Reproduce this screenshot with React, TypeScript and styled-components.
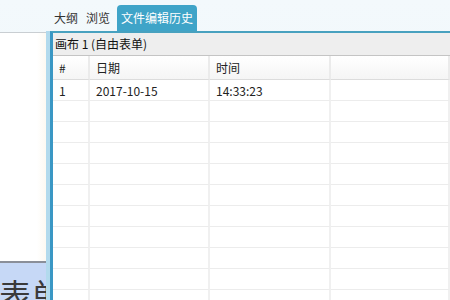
import styled, { createGlobalStyle } from "styled-components";

const GlobalStyle = createGlobalStyle`
  *, *::before, *::after {
    box-sizing: border-box;
  }

  html, body {
    margin: 0;
    padding: 0;
    width: 450px;
    height: 300px;
    overflow: hidden;
    background: #eef6fa;
    font-family: "Noto Sans CJK SC", "Noto Sans", sans-serif;
    font-size: 12px;
    color: #222;
  }
`;

const tabs = ["大纲", "浏览", "文件编辑历史"];
const activeTab = 2;

const rows = [{ id: "1", date: "2017-10-15", time: "14:33:23" }];
const emptyRows = 10;

const App = () => {
  return (
    <Page>
      <GlobalStyle />
      <TabBar>
        {tabs.map((t, i) => (
          <Tab key={t} active={i === activeTab}>
            {t}
          </Tab>
        ))}
      </TabBar>

      <Body>
        <LeftPane>
          <LeftBlank />
          <FormTitle>
            <BigText>表单</BigText>
          </FormTitle>
        </LeftPane>

        <Splitter />

        <Panel>
          <PanelTitle>画布 1 (自由表单)</PanelTitle>
          <Grid>
            <HeadCell>#</HeadCell>
            <HeadCell>日期</HeadCell>
            <HeadCell>时间</HeadCell>
            <HeadCell />
            {rows.map((r) => (
              <Row key={r.id}>
                <Cell>{r.id}</Cell>
                <Cell>{r.date}</Cell>
                <Cell>{r.time}</Cell>
                <Cell />
              </Row>
            ))}
            {Array.from({ length: emptyRows }).map((_, i) => (
              <Row key={"e" + i}>
                <Cell />
                <Cell />
                <Cell />
                <Cell />
              </Row>
            ))}
          </Grid>
        </Panel>
      </Body>
    </Page>
  );
};

const Page = styled.div`
  width: 450px;
  height: 300px;
  display: flex;
  flex-direction: column;
  background: linear-gradient(#f3f9fc, #edf5f9);
`;

const TabBar = styled.div`
  height: 31px;
  display: flex;
  align-items: flex-end;
  padding-left: 51px;
  gap: 2px;
`;

type TTab = {
  active?: boolean;
};

const Tab = styled.div<TTab>`
  height: 26px;
  line-height: 26px;
  padding: 0 ${({ active }) => (active ? "4px" : "3px")};
  border-radius: 4px 4px 0 0;
  background: ${({ active }) => (active ? "#3fa4c8" : "transparent")};
  color: ${({ active }) => (active ? "#fff" : "#333")};
  font-size: 12px;
  margin-left: ${({ active }) => (active ? "2px" : "0")};
`;

const Body = styled.div`
  flex: 1;
  display: flex;
  min-height: 0;
`;

const LeftPane = styled.div`
  width: 46px;
  display: flex;
  flex-direction: column;
  margin-top: 1px;
  border-top: 1px solid #c9ced2;
  background: #fff;
  overflow: hidden;
`;

const LeftBlank = styled.div`
  flex: 1;
  background: linear-gradient(90deg, #fff 80%, #fcf9f2);
`;

const FormTitle = styled.div`
  height: 39px;
  border-top: 2px solid #8a8f99;
  background: #c6d8f6;
  overflow: hidden;
  white-space: nowrap;
`;

const BigText = styled.div`
  font-family: "Noto Sans CJK SC", serif;
  font-size: 32px;
  line-height: 32px;
  color: #3a3a3a;
  padding-top: 14px;
  margin-left: -1px;
`;

const Splitter = styled.div`
  width: 4px;
  background: #b2daed;
`;

const Panel = styled.div`
  flex: 1;
  display: flex;
  flex-direction: column;
  border-left: 3px solid #3a97c4;
  border-top: 2px solid #48a1bf;
  background: #fff;
  overflow: hidden;
`;

const PanelTitle = styled.div`
  height: 23px;
  line-height: 22px;
  padding-left: 2px;
  background: #eeeeee;
  border-bottom: 1px solid #c4c4c4;
  color: #111;
  flex-shrink: 0;
`;

const Grid = styled.div`
  display: grid;
  grid-template-columns: 37px 120px 121px 1fr;
  grid-template-rows: 24px;
  grid-auto-rows: 21px;
`;

const HeadCell = styled.div`
  line-height: 23px;
  padding-left: 6px;
  background: linear-gradient(#fff, #f5f5f5);
  border-right: 2px solid #ebebeb;
  border-bottom: 1px solid #dcdcdc;
  color: #222;
`;

const Row = styled.div`
  display: contents;
`;

const Cell = styled.div`
  line-height: 21px;
  padding-left: 6px;
  border-right: 2px solid #f0f0f0;
  border-bottom: 1px solid #ececec;
  color: #222;
`;

export default App;
